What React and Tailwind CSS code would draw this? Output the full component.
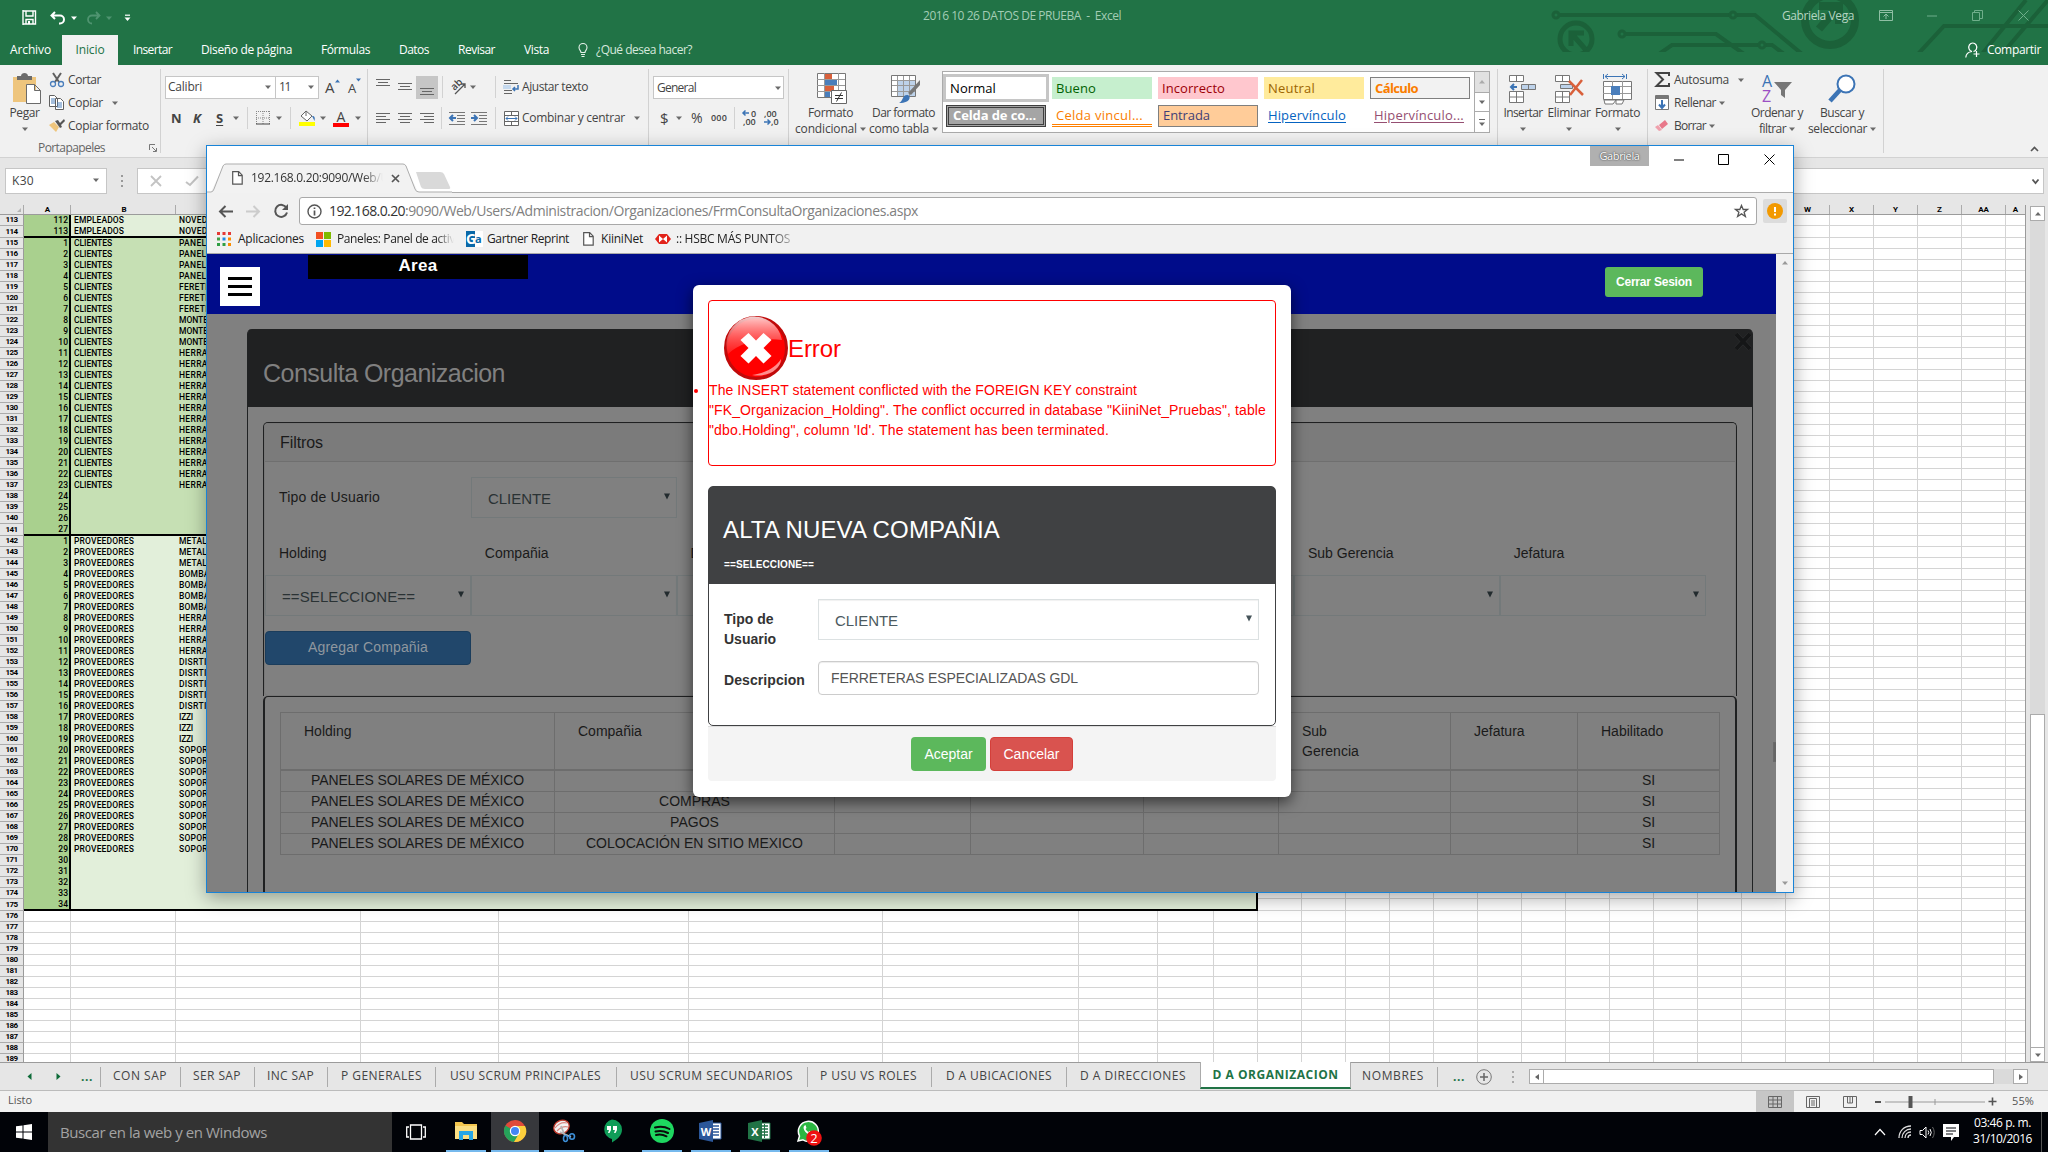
import React, { useLayoutEffect, useRef, useState } from "react";

const UI = "font-['Open_Sans','Noto_Sans',sans-serif]";

/* Text that is tracked so that it fills exactly w pixels. */
function Fit({ w, className = "", children }) {
  const ref = useRef(null);
  const [ls, setLs] = useState(null);
  useLayoutEffect(() => {
    const n = ref.current.textContent.length;
    setLs((w - ref.current.getBoundingClientRect().width) / n);
  }, [w]);
  return (
    <span
      ref={ref}
      className={"inline-block shrink-0 whitespace-pre " + className}
      style={ls === null ? undefined : { letterSpacing: ls + "px" }}
    >
      {children}
    </span>
  );
}

function Ic({ w, h, className = "", children }) {
  return (
    <svg width={w} height={h} viewBox={`0 0 ${w} ${h}`} fill="none" className={"block shrink-0 overflow-visible " + className}>
      {children}
    </svg>
  );
}

const Tri = ({ className = "", c = "#6a6a6a" }) => (
  <Ic w={6} h={4} className={className}>
    <path d="M0 0.5h6L3 4z" fill={c} />
  </Ic>
);

const Sep = ({ className = "" }) => <div className={"w-px shrink-0 bg-[#d2d2d2] " + className} />;

/* ---------- Excel title bar ---------- */
function Circuit() {
  return (
    <div className="absolute left-[1540px] top-0 h-[52px] w-[508px] overflow-hidden">
      <Ic w={508} h={52}>
        <g stroke="#1b6139" strokeWidth="4">
          <circle cx="16" cy="15" r="3" strokeWidth="3" />
          <path d="M19 15H190M197 15H215L262 54" />
          <circle cx="193" cy="15" r="3" strokeWidth="3" />
          <circle cx="82" cy="34" r="3" strokeWidth="3" />
          <path d="M85 34H176L204 54M119 54L132 45H219M226 45H232L244 54" />
          <circle cx="222" cy="45" r="3" strokeWidth="3" />
          <circle cx="36" cy="39" r="16" strokeWidth="5" />
          <path d="M31 46V33H44M32 34L46 50" strokeWidth="5" />
          <circle cx="290" cy="20" r="25" strokeWidth="8" />
          <path d="M279 6H299V24M298 7L279 29" strokeWidth="8" />
          <path d="M378 54L404 26H508M442 54L486 0M462 54L508 0" />
        </g>
      </Ic>
    </div>
  );
}

function TitleBar() {
  return (
    <div className="relative h-[65px] overflow-hidden bg-[#217346] text-white">
      <Circuit />
      <div className="relative flex h-[35px] items-center text-[12px] leading-4">
        <Ic w={15} h={15} className="ml-[22px]">
          <path d="M1 1h12.500v13H1M1 0v15M4 14v-4.500h7V14M4 1.500v4.500h7v-4.500" stroke="#fff" strokeWidth="1.400" />
          <path d="M6 11h2v3H6z" fill="#fff" />
        </Ic>
        <Ic w={16} h={14} className="ml-[13px]">
          <path d="M5 1L1.5 4.5L5 8M2 4.5H10a4 4 0 0 1 0 8H9" stroke="#fff" strokeWidth="2" />
        </Ic>
        <Tri className="ml-[5px]" c="#fff" />
        <Ic w={16} h={14} className="ml-[9px]">
          <path d="M10 1L13.5 4.5L10 8M13 4.5H6a4 4 0 0 0 0 8" stroke="#4f9470" strokeWidth="1.8" />
        </Ic>
        <Tri className="ml-[4px]" c="#4f9470" />
        <Ic w={7} h={8} className="ml-[12px]">
          <path d="M1 1.200h5" stroke="#fff" strokeWidth="1.200" />
          <path d="M0.500 3.500h6L3.500 7z" fill="#fff" />
        </Ic>
        <div className="ml-[792px] flex text-[#a3cdb5] pb-[3px]">
          <Fit w={198}>2016 10 26 DATOS DE PRUEBA  -  Excel</Fit>
        </div>
        <div className="ml-[661px] flex pb-[3px] text-[#b5d5c2]">
          <Fit w={72}>Gabriela Vega</Fit>
        </div>
        <Ic w={14} h={11} className="-mt-[4px] ml-[25px]">
          <path d="M0.500 0.500h13v10H0.500zM0.500 2.500h13M7 9V4M4.500 6.500L7 4l2.500 2.500" stroke="#8fbfa4" />
        </Ic>
        <Ic w={10} h={2} className="-mt-[4px] ml-[34px]"><path d="M0 1h10" stroke="#6fae8b" /></Ic>
        <Ic w={11} h={11} className="-mt-[4px] ml-[35px]"><path d="M0.500 2.500h7v8h-7zM2.500 2V0.500h8v8H8" stroke="#6fae8b" /></Ic>
        <Ic w={11} h={11} className="-mt-[4px] ml-[35px]"><path d="M0.500 0.500l10 10M10.500 0.500l-10 10" stroke="#6fae8b" /></Ic>
      </div>
      <div className="relative flex h-[30px] items-center text-[12px] leading-4">
        <Fit w={41} className="ml-[10px]">Archivo</Fit>
        <div className="ml-[11px] flex h-[30px] w-[56px] items-center justify-center bg-[#f1f1f1] text-[#217346]"><Fit w={29}>Inicio</Fit></div>
        <Fit w={39} className="ml-[15px]">Insertar</Fit>
        <Fit w={91} className="ml-[29px]">Diseño de página</Fit>
        <Fit w={49} className="ml-[29px]">Fórmulas</Fit>
        <Fit w={30} className="ml-[29px]">Datos</Fit>
        <Fit w={37} className="ml-[29px]">Revisar</Fit>
        <Fit w={25} className="ml-[29px]">Vista</Fit>
        <Ic w={10} h={14} className="ml-[29px]">
          <path d="M3 9.500C3 7.500 1 7 1 4.500a4 4 0 0 1 8 0C9 7 7 7.500 7 9.500zM3 11.500h4M3.500 13.500h3" stroke="#e6f1ea" strokeWidth="1.1" />
        </Ic>
        <Fit w={96} className="ml-[8px] text-[#d6e8dd]">¿Qué desea hacer?</Fit>
        <Ic w={15} h={16} className="ml-[1273px]">
          <path d="M7 9.500a4 4.300 0 1 1 1.500 0M7 9.500C3 10 1 12 0.800 15.500M11.500 9v6M8.500 12h6" stroke="#fff" strokeWidth="1.200" />
        </Ic>
        <Fit w={54} className="ml-[7px]">Compartir</Fit>
      </div>
    </div>
  );
}

/* ---------- Ribbon ---------- */
const Lines = ({ rows, h = 14, className = "" }) => (
  <Ic w={15} h={h} className={className}>
    {rows.map(([x, y, l], i) => <path key={i} d={`M${x} ${y}.5h${l}`} stroke="#666" />)}
  </Ic>
);

function Stack({ className, icon, lines, arrowBelow }) {
  return (
    <div className={"flex flex-col items-center " + className}>
      <div className="mt-[7px] flex h-[33px] items-center">{icon}</div>
      <div className="flex h-4 items-center">{lines[0]}</div>
      <div className="flex h-4 items-center gap-[3px]">{arrowBelow ? <Tri /> : <>{lines[1]}<Tri /></>}</div>
    </div>
  );
}

function Clipboard() {
  return (
    <div className="flex w-[160px] flex-col">
      <div className="flex h-[73px]">
        <div className="w-[48px]">
          <Stack
            className="w-[49px]"
            arrowBelow
            icon={
              <Ic w={30} h={31} className="ml-[5px]">
                <path d="M1 4h23v25H1z" fill="#eec57d" />
                <path d="M5 7V3h4c0-4 7-4 7 0h4v4z" fill="#6b6b6b" />
                <path d="M14.500 11.500h8l6 6v13h-14zM22.500 11.500v6h6" fill="#fff" stroke="#6b6b6b" />
              </Ic>
            }
            lines={[<Fit key="a" w={30}>Pegar</Fit>]}
          />
        </div>
        <div className="flex flex-col pt-[3px]">
          <div className="flex h-[23px] items-center">
            <Ic w={16} h={16} className="ml-[1px]">
              <path d="M4 1l6 9M12 1L6 10" stroke="#606060" strokeWidth="2" />
              <circle cx="4" cy="12" r="2.500" stroke="#4a7ebb" strokeWidth="1.300" />
              <circle cx="12" cy="12" r="2.500" stroke="#4a7ebb" strokeWidth="1.300" />
            </Ic>
            <Fit w={33} className="ml-[3px]">Cortar</Fit>
          </div>
          <div className="flex h-[23px] items-center">
            <Ic w={16} h={15} className="ml-[1px]">
              <path d="M0.500 0.500h5l3 3v8h-8zM6.500 3.500h5l3 3v8h-8z" fill="#fff" stroke="#606060" />
              <path d="M2 4h4M2 6h4M2 8h4M8 8h5M8 10h5M8 12h5" stroke="#4a7ebb" />
            </Ic>
            <Fit w={35} className="ml-[3px]">Copiar</Fit>
            <Tri className="ml-[9px]" />
          </div>
          <div className="flex h-[23px] items-center">
            <Ic w={16} h={15} className="ml-[1px]">
              <path d="M0 7l5-3 5 5-3 5z" fill="#eec57d" />
              <path d="M6 3l3-1 2 3 4-4 1 2-4 4 1 2-2 1z" fill="#555" />
            </Ic>
            <Fit w={81} className="ml-[3px]">Copiar formato</Fit>
          </div>
        </div>
      </div>
      <div className="flex h-[19px] items-center text-[#666]">
        <Fit w={67} className="ml-[38px]">Portapapeles</Fit>
        <Ic w={8} h={8} className="ml-[44px]"><path d="M0.500 6V0.500H6M3 3l4 4M7.500 4v3.500H4" stroke="#777" /></Ic>
      </div>
    </div>
  );
}

function FontGroup() {
  return (
    <div className="flex w-[206px] flex-col pt-[11px]">
      <div className="flex h-[22px] items-center">
        <div className="ml-[4px] flex h-[23px] w-[111px] items-center border border-[#c6c6c6] bg-white pl-[2px]"><Fit w={34}>Calibri</Fit><Tri className="ml-[63px]" /></div>
        <div className="-ml-px flex h-[23px] w-[44px] items-center border border-[#c6c6c6] bg-white pl-[3px]"><Fit w={11}>11</Fit><Tri className="ml-[18px]" /></div>
        <div className="ml-[6px] flex w-[23px] items-start"><span className="text-[15px] leading-5">A</span><Ic w={5} h={4} className="mt-[2px]"><path d="M0 3.500L2.500 0.500L5 3.500z" fill="#3c74b5" /></Ic></div>
        <div className="flex items-start"><span className="pt-[2px] text-[13px] leading-5">A</span><Ic w={5} h={4} className="mt-[2px]"><path d="M0 0.500h5L2.500 3.500z" fill="#3c74b5" /></Ic></div>
      </div>
      <div className="mt-[9px] flex h-[22px] items-center">
        <span className="ml-[10px] w-[22px] text-[13px] font-bold">N</span>
        <span className="w-[23px] text-[13px] font-bold italic">K</span>
        <span className="w-[17px] text-[13px] font-bold underline underline-offset-2">S</span>
        <Tri />
        <Sep className="ml-[8px] h-[22px]" />
        <Ic w={14} h={14} className="ml-[8px]">
          <path d="M0.500 0v13M13.500 0v13M7 0v13M0 0.500h14M0 7h14" stroke="#888" strokeDasharray="1 1" />
          <path d="M0 13h14" stroke="#444" />
        </Ic>
        <Tri className="ml-[6px]" />
        <Sep className="ml-[8px] h-[22px]" />
        <Ic w={17} h={16} className="ml-[8px]">
          <path d="M2 6l5-5 6 5-5 5zM7 1v5" fill="#fff" stroke="#666" />
          <path d="M13 6c3 0 3 2 2.500 5z" fill="#3c74b5" />
          <path d="M0 12h16v4H0z" fill="#ff0" />
        </Ic>
        <Tri className="ml-[4px]" />
        <div className="ml-[7px] flex h-[17px] w-[16px] items-start justify-center border-b-4 border-[#f00]"><span className="text-[14px] leading-[14px]">A</span></div>
        <Tri className="ml-[6px]" />
      </div>
    </div>
  );
}

function AlignGroup() {
  return (
    <div className="flex w-[280px] flex-col pt-[11px]">
      <div className="flex h-[22px] items-center">
        <Lines className="ml-[8px] -mt-[9px]" h={8} rows={[[0, 0, 14], [2, 3, 10], [0, 6, 14]]} />
        <Lines className="ml-[7px]" h={8} rows={[[0, 0, 14], [2, 3, 10], [0, 6, 14]]} />
        <div className="ml-[3px] flex h-[23px] w-[22px] items-end justify-center bg-[#c6c6c6] pb-[3px]"><Lines className="" h={8} rows={[[0, 0, 14], [2, 3, 10], [0, 6, 14]]} /></div>
        <Sep className="ml-[4px] h-[22px]" />
        <div className="relative ml-[7px] flex h-[16px] w-[16px] items-center">
          <span className="-mt-[6px] -rotate-45 text-[10px] font-semibold leading-3">ab</span>
          <Ic w={16} h={16} className="absolute left-0 top-0"><path d="M5 15L15 5M15 9V5h-4" stroke="#555" strokeWidth="1.300" /></Ic>
        </div>
        <Tri className="ml-[4px]" />
        <Sep className="ml-[19px] h-[22px]" />
        <Ic w={16} h={15} className="ml-[7px]">
          <path d="M1 0.500h7M1 3.500h14M1 6.500h7M1 10.500h8M1 13.500h8" stroke="#666" />
          <path d="M0 5h8v4H0z" fill="#c5d9ee" />
          <path d="M15 5v4h-5M12 7l-2 2 2 2" stroke="#3c74b5" strokeWidth="1.500" />
        </Ic>
        <Fit w={66} className="ml-[3px]">Ajustar texto</Fit>
      </div>
      <div className="mt-[9px] flex h-[22px] items-center">
        <Lines className="ml-[8px]" h={11} rows={[[0, 0, 14], [0, 3, 10], [0, 6, 14], [0, 9, 10]]} />
        <Lines className="ml-[7px]" h={11} rows={[[0, 0, 14], [2, 3, 10], [0, 6, 14], [2, 9, 10]]} />
        <Lines className="ml-[7px]" h={11} rows={[[0, 0, 14], [4, 3, 10], [0, 6, 14], [4, 9, 10]]} />
        <Sep className="ml-[6px] h-[22px]" />
        <Ic w={16} h={13} className="ml-[7px]">
          <path d="M0 0.500h16M8 3.500h8M8 6.500h8M8 9.500h8M0 12.500h16" stroke="#777" />
          <path d="M7 6H1M4 3L1 6l3 3" stroke="#3c74b5" strokeWidth="2" />
        </Ic>
        <Ic w={16} h={13} className="ml-[6px]">
          <path d="M0 0.500h16M8 3.500h8M8 6.500h8M8 9.500h8M0 12.500h16" stroke="#777" />
          <path d="M0 6h6M3 3l3 3-3 3" stroke="#3c74b5" strokeWidth="2" />
        </Ic>
        <Sep className="ml-[8px] h-[22px]" />
        <Ic w={15} h={15} className="ml-[8px]">
          <path d="M0.500 0.500h14v14H0.500zM0.500 4.500h14M0.500 10.500h14M7.500 0.500v4M7.500 10.500v4" fill="#fff" stroke="#666" />
          <path d="M2 7.500h11M4 5.500l-2 2 2 2M11 5.500l2 2-2 2" stroke="#3c74b5" />
        </Ic>
        <Fit w={103} className="ml-[3px]">Combinar y centrar</Fit>
        <Tri className="ml-[9px]" />
      </div>
    </div>
  );
}

function NumberGroup() {
  const digits = "absolute text-[9px] font-semibold leading-[8px]";
  return (
    <div className="flex w-[139px] flex-col pt-[11px]">
      <div className="ml-[4px] flex h-[23px] w-[131px] items-center border border-[#c6c6c6] bg-white pl-[3px]"><Fit w={39}>General</Fit><Tri className="ml-[79px]" /></div>
      <div className="mt-[8px] flex h-[22px] items-center">
        <span className="ml-[11px] w-[16px] text-[15px]">$</span>
        <Tri />
        <Fit w={13} className="ml-[9px] text-[14px]">%</Fit>
        <Fit w={16} className="ml-[7px] text-[9px] font-semibold">000</Fit>
        <Sep className="ml-[7px] h-[22px]" />
        <div className="relative ml-[7px] h-[16px] w-[16px]">
          <span className={digits + " left-[9px] top-0"}>0</span>
          <span className={digits + " left-[1px] top-[8px]"}>,00</span>
          <Ic w={16} h={15}><path d="M7 3H1M3.500 0.500L1 3l2.500 2.500" stroke="#3c74b5" strokeWidth="1.500" /></Ic>
        </div>
        <div className="relative ml-[6px] h-[16px] w-[16px]">
          <span className={digits + " left-0 top-0"}>,00</span>
          <span className={digits + " left-[7px] top-[8px]"}>,0</span>
          <Ic w={16} h={15}><path d="M0 12h6M3.500 9.500L6 12l-2.500 2.500" stroke="#3c74b5" strokeWidth="1.500" /></Ic>
        </div>
      </div>
    </div>
  );
}

function Styles() {
  const cell = "flex h-[22px] w-[100px] items-center pl-[4px] text-[13px] leading-4";
  return (
    <div className="mt-[6px] flex h-[62px] w-[548px] border border-[#ababab] bg-white">
      <div className="grid grow grid-cols-[100px_100px_100px_100px_100px] content-start gap-x-[6px] gap-y-[6px] pl-[3px] pt-[5px]">
        <div className={cell + " text-black outline-[3px] outline-[#c6c6c6] outline"}><Fit w={46}>Normal</Fit></div>
        <div className={cell + " bg-[#c6efce] text-[#006100]"}><Fit w={40}>Bueno</Fit></div>
        <div className={cell + " bg-[#ffc7ce] text-[#9c0006]"}><Fit w={63}>Incorrecto</Fit></div>
        <div className={cell + " bg-[#ffeb9c] text-[#9c6500]"}><Fit w={47}>Neutral</Fit></div>
        <div className={cell + " border border-[#7f7f7f] bg-[#f2f2f2] pl-[3px] font-bold text-[#fa7d00]"}><Fit w={43}>Cálculo</Fit></div>
        <div className={cell + " border-[3px] border-double border-[#3f3f3f] bg-[#a5a5a5] pl-[1px] pb-[2px] font-bold text-white"}><Fit w={83}>Celda de co...</Fit></div>
        <div className={cell + " border-b-[3px] border-double border-[#ff8001] text-[#fa7d00]"}><Fit w={87}>Celda vincul...</Fit></div>
        <div className={cell + " border border-[#7f7f7f] bg-[#ffcc99] pl-[3px] pb-[2px] text-[#3f3f76]"}><Fit w={47}>Entrada</Fit></div>
        <div className={cell + " pb-[2px] text-[#0563c1] underline underline-offset-2"}><Fit w={78}>Hipervínculo</Fit></div>
        <div className={cell + " pb-[2px] text-[#954f72] underline underline-offset-2"}><Fit w={90}>Hipervínculo...</Fit></div>
      </div>
      <div className="flex w-[15px] flex-col border-l border-[#ababab]">
        <div className="flex h-[20px] items-center justify-center bg-[#e1e1e1]"><Tri className="rotate-180" c="#ababab" /></div>
        <div className="flex h-[20px] items-center justify-center border-y border-[#ababab]"><Tri /></div>
        <div className="flex h-[20px] flex-col items-center justify-center gap-[2px]"><div className="h-px w-[6px] bg-[#6a6a6a]" /><Tri /></div>
      </div>
    </div>
  );
}

function StylesGroup() {
  return (
    <div className="flex w-[708px]">
      <Stack className="ml-[3px] w-[77px]" icon={
        <Ic w={31} h={31} className="ml-[3px]">
          <path d="M0.500 0.500h28v24h-28z" fill="#fff" stroke="#777" />
          <path d="M8 1h7v5H8zM8 12h9v6H8z" fill="#d9603b" /><path d="M8 6h12v6H8zM8 18h5v6H8z" fill="#4a7ebb" />
          <path d="M7.500 0v24M21.500 0v24M0 6.500h28M0 12.500h28M0 18.500h28" stroke="#999" />
          <path d="M14.500 17.500h15v13h-15z" fill="#fff" stroke="#666" />
          <path d="M18 22.500h8M18 25.500h8M24.500 19.500l-5 9" stroke="#333" />
        </Ic>} lines={[<Fit key="a" w={45}>Formato</Fit>, <Fit key="b" w={62}>condicional</Fit>]} />
      <Stack className="w-[69px]" icon={
        <Ic w={30} h={30} className="ml-[5px]">
          <path d="M0.500 1.500h24v21H0.500z" fill="#fff" stroke="#777" />
          <path d="M7 7h17v15H7z" fill="#bdd2ea" />
          <path d="M6.500 2v20M12.500 2v20M18.500 2v20M1 6.500h23M1 11.500h23M1 17.500h23" stroke="#999" />
          <path d="M29 6v5L20 21l-3-2z" fill="#777" /><path d="M8 29c4-1 3-8 8-8 4 0 5 8-8 8z" fill="#3c74b5" />
        </Ic>} lines={[<Fit key="a" w={63}>Dar formato</Fit>, <Fit key="b" w={60}>como tabla</Fit>]} />
      <div className="ml-[4px]"><Styles /></div>
    </div>
  );
}

const CellStack = ({ del }) => (
  <Ic w={30} h={30}>
    <path d="M1.500 1.500h14v6h-14zM8.500 1.500v6M1.500 17.500h14v11h-14zM8.500 17.500v11M1.500 23h14" fill="#fff" stroke="#777" />
    <path d={del ? "M6.500 10.500h12v4h-12z" : "M13.500 10.500h14v5h-14zM20.500 10.500v5"} fill="#bdd2ea" stroke="#777" />
    {del
      ? <path d="M15 7l14 14M28 6L16 21" stroke="#d9603b" strokeWidth="2.500" />
      : <path d="M9 13H3M6 10l-3 3 3 3" stroke="#3c74b5" strokeWidth="2" />}
  </Ic>
);

function Ribbon() {
  return (
    <div className="flex h-[93px] border-b border-[#d2d2d2] bg-[#f1f1f1] text-[12px] leading-4 text-[#444]">
      <Clipboard />
      <Sep className="mt-1 h-[84px]" />
      <FontGroup />
      <Sep className="mt-1 h-[84px]" />
      <AlignGroup />
      <Sep className="mt-1 h-[84px]" />
      <NumberGroup />
      <Sep className="mt-1 h-[84px]" />
      <StylesGroup />
      <Sep className="mt-1 h-[84px]" />
      <div className="flex w-[149px] pl-[3px]">
        <Stack arrowBelow className="w-[44px]" icon={<CellStack />} lines={[<Fit key="a" w={39}>Insertar</Fit>]} />
        <Stack arrowBelow className="w-[48px]" icon={<CellStack del />} lines={[<Fit key="a" w={43}>Eliminar</Fit>]} />
        <Stack arrowBelow className="w-[49px]" icon={
          <Ic w={29} h={32}>
            <path d="M0.500 1v5M23.500 1v5M2 3.500h20M5 1L2 3.500 5 6M19 1l3 2.500L19 6" stroke="#3c74b5" />
            <path d="M0.500 8.500h28v18h-28z" fill="#fff" stroke="#777" />
            <path d="M9.500 8v18M19.500 8v18M0 13.500h28M0 20.500h28" stroke="#999" /><path d="M8 13h9v9H8z" fill="#4a7ebb" />
            <path d="M1 27h12l-3 4H2zM13 27h8l-2 4h-6z" fill="#fff" stroke="#777" />
          </Ic>} lines={[<Fit key="a" w={45}>Formato</Fit>]} />
      </div>
      <Sep className="mt-1 h-[84px]" />
      <div className="flex w-[235px]">
        <div className="flex w-[97px] flex-col pl-[7px] pt-[3px]">
          <div className="flex h-[23px] items-center">
            <Ic w={15} h={15}><path d="M14 4V1H1.500L8 7.500 1.500 14H14v-3" stroke="#444" strokeWidth="2" /></Ic>
            <Fit w={55} className="ml-[4px]">Autosuma</Fit><Tri className="ml-[9px]" />
          </div>
          <div className="flex h-[23px] items-center">
            <Ic w={15} h={15}><path d="M0.500 0.500h13v14h-13z" fill="#fff" stroke="#777" /><path d="M1 1h12v3H1z" fill="#777" /><path d="M7 5v8M4 9.500L7 13l3-3.500" stroke="#3c74b5" strokeWidth="2" /></Ic>
            <Fit w={42} className="ml-[4px]">Rellenar</Fit><Tri className="ml-[3px]" />
          </div>
          <div className="flex h-[23px] items-center">
            <Ic w={15} h={15}><path d="M4 7l6-5 3 4-6 5z" fill="#e8788a" /><path d="M0 9l3-2 4 5-3 1z" fill="#f0a0ac" /></Ic>
            <Fit w={32} className="ml-[4px]">Borrar</Fit><Tri className="ml-[3px]" />
          </div>
        </div>
        <Stack className="w-[64px]" icon={
          <div className="flex h-[30px] w-[30px]">
            <div className="flex w-[11px] flex-col text-[16px]"><span className="h-[15px] leading-[15px] text-[#3c74b5]">A</span><span className="h-[15px] leading-[15px] text-[#9b4fc4]">Z</span></div>
            <Ic w={19} h={30}><path d="M1 8h18l-7 8v8l-4-3v-5z" fill="#777" /></Ic>
          </div>} lines={[<Fit key="a" w={52}>Ordenar y</Fit>, <Fit key="b" w={27}>filtrar</Fit>]} />
        <Stack className="w-[66px]" icon={
          <Ic w={28} h={29}>
            <circle cx="18" cy="10" r="8.500" stroke="#3c74b5" strokeWidth="2" fill="#fff" /><path d="M12 16L2 27" stroke="#3c74b5" strokeWidth="4.500" />
          </Ic>} lines={[<Fit key="a" w={44}>Buscar y</Fit>, <Fit key="b" w={59}>seleccionar</Fit>]} />
      </div>
      <Sep className="mt-1 h-[84px]" />
      <Ic w={9} h={6} className="ml-[146px] mt-[81px]"><path d="M1 5l3.500-3.500L8 5" stroke="#555" strokeWidth="1.600" /></Ic>
    </div>
  );
}

/* ---------- Sheet ---------- */
const COLS = [
  "w-[47px]", "w-[105px]", "w-[185px]", "w-[138px]", "w-[190px]", "w-[194px]", "w-[196px]", "w-[79px]", "w-[56px]", "w-[44px]",
  ...Array(17).fill("w-[44px]"), "w-[20px]",
];
const HEADS = { 0: "A", 1: "B", 22: "W", 23: "X", 24: "Y", 25: "Z", 26: "AA", 27: "A" };

const third = (r) =>
  r <= 114 ? ["NOVEDADES", 50] : r <= 118 ? ["PANELES", 38] : r <= 121 ? ["FERETERO", 43] : r <= 124 ? ["MONTERO", 40] : r <= 137 ? ["HERRAJE", 39]
    : r <= 144 ? ["METALES", 38] : r <= 148 ? ["BOMBAS", 36] : r <= 152 ? ["HERRAJE", 39] : r <= 157 ? ["DISRTIN", 34] : r <= 160 ? ["IZZI", 14] : ["SOPORTE", 39];

function Row({ r }) {
  const green = r <= 175;
  const last = r === 114 || r === 141 || r === 175;
  const [name, nameW] = r <= 114 ? ["EMPLEADOS", 50] : r <= 137 ? ["CLIENTES", 38] : r >= 142 && r <= 170 ? ["PROVEEDORES", 60] : ["", 0];
  const num = r <= 114 ? r - 1 : r <= 141 ? r - 114 : r - 141;
  const tone = r >= 115 && r <= 141 ? " bg-[#c6e0b4]" : " bg-[#e2efda]";
  const [t, tw] = third(r);
  return (
    <div className={"flex shrink-0 text-[8.5px] font-medium leading-[11px] text-black " + (last ? "h-[12px]" : "h-[11px]")}>
      <div className="flex w-[24px] shrink-0 items-end justify-center border-b border-r border-b-[#ababab] border-r-[#9b9b9b] bg-[#e6e6e6] text-[8px] font-bold leading-[10px]"><Fit w={12}>{r}</Fit></div>
      {COLS.map((w, i) => {
        if (green && i < 10) {
          const edge = last ? " border-b-[2px] border-b-black" : "";
          if (i === 0) return <div key={i} className={w + " flex shrink-0 justify-end border-r-[2px] border-r-black bg-[#a9d08e] pr-px" + edge}><span>{num}</span></div>;
          if (i === 1) return <div key={i} className={w + " flex shrink-0 pl-[3px]" + tone + edge}>{name && <Fit w={nameW}>{name}</Fit>}</div>;
          if (i === 2) return <div key={i} className={w + " flex shrink-0 pl-[3px]" + tone + edge}>{name && <Fit w={tw}>{t}</Fit>}</div>;
          return <div key={i} className={w + " shrink-0" + tone + edge + (i === 9 ? " border-r-[2px] border-r-black" : "")} />;
        }
        return <div key={i} className={w + " shrink-0 border-b border-r border-[#d4d4d4] bg-white"} />;
      })}
    </div>
  );
}

function Sheet() {
  const rows = [];
  for (let r = 113; r <= 189; r++) rows.push(r);
  return (
    <div className="flex h-[857px] bg-[#e6e6e6]">
      <div className="flex w-[2026px] shrink-0 flex-col overflow-hidden border-r border-[#9b9b9b] font-['Roboto','Liberation_Sans',sans-serif]">
        <div className="flex h-[10px] shrink-0 border-b border-[#9b9b9b] text-[8px] font-bold leading-[9px] text-black">
          <div className="flex w-[24px] shrink-0 items-end justify-end border-r border-[#ababab] p-[2px]"><Ic w={4} h={4}><path d="M4 0v4H0z" fill="#b5b5b5" /></Ic></div>
          {COLS.map((w, i) => <div key={i} className={w + " shrink-0 overflow-hidden border-r border-[#ababab] text-center " + (i === 1 ? "pl-[2px]" : i === 0 ? "pl-[1px]" : "")}>{HEADS[i] || ""}</div>)}
        </div>
        {rows.map((r) => <Row key={r} r={r} />)}
      </div>
      <div className="ml-[4px] flex w-[15px] flex-col">
        <div className="mt-[1px] flex h-[15px] items-center justify-center border border-[#ababab] bg-white"><Tri className="rotate-180" /></div>
        <div className="h-[493px] bg-[#dadada]" />
        <div className="h-[334px] border border-[#ababab] bg-white" />
        <div className="-mt-px flex h-[15px] items-center justify-center border border-[#ababab] bg-white"><Tri /></div>
      </div>
    </div>
  );
}

function FormulaBar() {
  return (
    <div className="flex h-[47px] bg-[#e6e6e6] pt-[10px] text-[12px] leading-4 text-[#444]">
      <div className="ml-[5px] flex h-[26px] w-[102px] items-center border border-[#c6c6c6] bg-white"><Fit w={22} className="ml-[6px]">K30</Fit><Tri className="-mt-[2px] ml-[59px]" /></div>
      <Ic w={2} h={12} className="ml-[14px] mt-[7px]"><path d="M1 0v2M1 5v2M1 10v2" stroke="#999" strokeWidth="2" /></Ic>
      <div className="ml-[14px] flex h-[26px] w-[1907px] items-center border border-[#c6c6c6] bg-white">
        <Ic w={12} h={10} className="ml-[12px]"><path d="M1 0l10 10M11 0L1 10" stroke="#c3c3c3" strokeWidth="1.800" /></Ic>
        <Ic w={14} h={10} className="ml-[23px]"><path d="M1 6l4 3L13 0.500" stroke="#c3c3c3" strokeWidth="2" /></Ic>
        <Ic w={7} h={5} className="ml-auto mr-[4px]"><path d="M0.500 0.500L3.500 4l3-3.500" stroke="#555" strokeWidth="1.800" /></Ic>
      </div>
    </div>
  );
}

const T = ({ w, ml, children }) => <Fit w={w} className={ml + " pb-[2px]"}>{children}</Fit>;
const TSep = ({ ml = "ml-[13px]" }) => <div className={"h-[20px] w-px shrink-0 bg-[#ababab] " + ml} />;

function SheetTabs() {
  return (
    <div className="flex h-[29px] items-center border-b border-t border-b-[#bcbcbc] border-t-[#9b9b9b] bg-[#e6e6e6] text-[12px] leading-4 text-[#444]">
      <Ic w={5} h={7} className="ml-[27px]"><path d="M4.500 0v7L0.500 3.500z" fill="#0d6b38" /></Ic>
      <Ic w={5} h={7} className="ml-[24px]"><path d="M0.500 0v7L4.500 3.500z" fill="#0d6b38" /></Ic>
      <Fit w={12} className="ml-[20px] font-bold text-[#217346]">...</Fit>
      <TSep ml="ml-[7px]" />
      <T w={54} ml="ml-[12px]">CON SAP</T><TSep />
      <T w={48} ml="ml-[12px]">SER SAP</T><TSep />
      <T w={47} ml="ml-[12px]">INC SAP</T><TSep />
      <T w={81} ml="ml-[13px]">P GENERALES</T><TSep />
      <T w={151} ml="ml-[14px]">USU SCRUM PRINCIPALES</T><TSep ml="ml-[15px]" />
      <T w={163} ml="ml-[13px]">USU SCRUM SECUNDARIOS</T><TSep ml="ml-[14px]" />
      <T w={97} ml="ml-[12px]">P USU VS ROLES</T><TSep ml="ml-[14px]" />
      <T w={106} ml="ml-[14px]">D A UBICACIONES</T><TSep ml="ml-[14px]" />
      <T w={106} ml="ml-[13px]">D A DIRECCIONES</T>
      <div className="-mt-[2px] ml-[14px] flex h-[27px] w-[151px] shrink-0 items-center justify-center border-x border-b-2 border-x-[#ababab] border-b-[#217346] bg-white font-bold text-[#217346]"><Fit w={126}>D A ORGANIZACION</Fit></div>
      <T w={62} ml="ml-[11px]">NOMBRES</T><TSep />
      <Fit w={12} className="ml-[15px] font-bold text-[#217346]">...</Fit>
      <Ic w={16} h={16} className="ml-[11px]"><circle cx="8" cy="8" r="7.300" stroke="#777" /><path d="M8 4v8M4 8h8" stroke="#666" strokeWidth="1.500" /></Ic>
      <Ic w={2} h={12} className="ml-[20px]"><path d="M1 0v2M1 5v2M1 10v2" stroke="#aaa" strokeWidth="2" /></Ic>
      <div className="ml-auto mr-[20px] flex h-[15px] w-[499px] shrink-0 bg-[#dadada]">
        <div className="flex w-[15px] items-center justify-center border border-[#ababab] bg-white"><Ic w={4} h={6}><path d="M4 0v6L0 3z" fill="#666" /></Ic></div>
        <div className="-ml-px w-[451px] border border-[#ababab] bg-white" />
        <div className="ml-auto flex w-[15px] items-center justify-center border border-[#ababab] bg-white"><Ic w={4} h={6}><path d="M0 0v6L4 3z" fill="#666" /></Ic></div>
      </div>
    </div>
  );
}

function StatusBar() {
  return (
    <div className="flex h-[21px] items-center bg-[#f1f1f1] text-[11px] leading-4 text-[#555]">
      <Fit w={24} className="ml-[8px] pb-[3px]">Listo</Fit>
      <div className="ml-[1724px] flex h-full w-[38px] items-center justify-center bg-[#c6c6c6]"><Ic w={14} h={12}><path d="M0.500 0.500h13v11H0.500zM5 0.500v11M9.500 0.500v11M0 4h14M0 8h14" stroke="#666" /></Ic></div>
      <Ic w={14} h={12} className="ml-[12px]"><path d="M0.500 0.500h13v11H0.500zM3.500 2.500h7v9h-7zM5 5h4M5 7h4M5 9h4" stroke="#666" /></Ic>
      <Ic w={14} h={12} className="ml-[23px]"><path d="M0.500 0.500h13v11H0.500zM4.500 1v6h5V1M7 1v6" stroke="#666" /></Ic>
      <div className="ml-[18px] h-[2px] w-[6px] bg-[#555]" />
      <Ic w={100} h={12} className="ml-[4px]"><path d="M0 6h100" stroke="#999" /><path d="M50 3v6" stroke="#999" /><path d="M23.500 0h4v12h-4z" fill="#555" /></Ic>
      <Ic w={9} h={9} className="ml-[3px]"><path d="M4.500 0.500v8M0.500 4.500h8" stroke="#555" strokeWidth="1.600" /></Ic>
      <Fit w={22} className="ml-[15px] pb-[2px]">55%</Fit>
    </div>
  );
}

/* ---------- Taskbar ---------- */
const Task = ({ className = "", on, children }) => (
  <div className={"flex h-full shrink-0 flex-col items-center " + className}>
    <div className="flex h-[38px] items-center">{children}</div>
    {on && <div className="h-[2px] w-full bg-[#76b9ed]" />}
  </div>
);

const Office = ({ c, letter }) => (
  <Ic w={24} h={22}>
    <path d="M11 3h11v16H11z" fill="#fff" stroke={c} />
    <path d="M13 6h7M13 9h7M13 12h7M13 15h7" stroke={c} strokeWidth="1.300" />
    {letter === "X" && <path d="M16.500 4v14" stroke={c} />}
    <path d="M0 3l14-3v22L0 19z" fill={c} />
    <text x="7" y="15.500" fontSize="11" fontWeight="bold" textAnchor="middle" fill="#fff">{letter}</text>
  </Ic>
);

function Taskbar() {
  return (
    <div className="flex h-[40px] items-center bg-[#010308] text-white">
      <Ic w={16} h={16} className="ml-[16px]"><path d="M0 2.300L6.500 1.400v6.100H0zM7.500 1.200L16 0v7.500H7.500zM0 8.500h6.500v6.100L0 13.700zM7.500 8.500H16V16l-8.500-1.200z" fill="#fff" /></Ic>
      <div className="ml-[16px] flex h-full w-[344px] items-center bg-[#333] text-[15px] text-[#a3a3a3]"><Fit w={207} className="ml-[12px]">Buscar en la web y en Windows</Fit></div>
      <Ic w={20} h={16} className="ml-[14px]"><path d="M4.500 1h11v14h-11zM3 3H0.700v10H3M17 3h2.300v10H17" stroke="#fff" strokeWidth="1.300" /></Ic>
      <Task on className="ml-[20px] w-[40px]">
        <Ic w={22} h={20}><path d="M0 1h7l2 2h13v15H0z" fill="#f3c64f" /><path d="M0 5h22v13H0z" fill="#fbdf83" /><path d="M4 10h14v9h-4v-5H8v5H4z" fill="#26a6e6" /></Ic>
      </Task>
      <Task on className="ml-[5px] w-[48px] bg-[#37383c]">
        <Ic w={24} h={24}>
          <circle cx="12" cy="12" r="11" fill="#e04a3a" />
          <path d="M12 12L2.400 6.500A11 11 0 0 0 11 23l5.500-8.500z" fill="#25a35a" />
          <path d="M12 12l4 2.500L11 23A11 11 0 0 0 22 7H12z" fill="#fbcf3c" />
          <circle cx="12" cy="12" r="5.200" fill="#fff" /><circle cx="12" cy="12" r="4" fill="#4285f4" />
        </Ic>
      </Task>
      <Task on className="ml-[5px] w-[40px]">
        <Ic w={24} h={24}>
          <ellipse cx="9.500" cy="8" rx="8" ry="6.500" fill="#f2f2f2" stroke="#c0392b" strokeWidth="1.300" transform="rotate(-25 9.500 8)" />
          <path d="M3 9c4-5 8-6 12-5M5 12c4-4 7-5 11-4" stroke="#d98880" strokeWidth="1.200" />
          <path d="M9 7l4 10M8 13l11 5" stroke="#b5b5b5" strokeWidth="1.800" />
          <ellipse cx="13.500" cy="19.500" rx="2" ry="3" stroke="#3c8fd8" strokeWidth="1.600" /><ellipse cx="20" cy="17.500" rx="2.500" ry="2.800" stroke="#3c8fd8" strokeWidth="1.600" />
        </Ic>
      </Task>
      <Task className="ml-[8px] w-[40px]">
        <Ic w={22} h={24}><path d="M11 0.500a10 10 0 0 1 10 10c0 6-5 10-10 13v-3.500a10 10 0 0 1 0-19.500z" fill="#0f9d58" /><path d="M6 7h4v4l-1.500 3H7l1-3H6zM12 7h4v4l-1.500 3H13l1-3h-2z" fill="#fff" /></Ic>
      </Task>
      <Task on className="ml-[10px] w-[40px]">
        <Ic w={24} h={24}><circle cx="12" cy="12" r="12" fill="#1ed760" /><path d="M5 8.500c5-1.500 10-1 14.500 1.500M5.500 12.500c4-1 8.500-.7 12.500 1.500M6 16c3.500-.8 7-.5 10.500 1.300" stroke="#0a0a0a" strokeWidth="2" strokeLinecap="round" /></Ic>
      </Task>
      <Task on className="ml-[9px] w-[40px]"><Office c="#2b579a" letter="W" /></Task>
      <Task on className="ml-[9px] w-[40px]"><Office c="#217346" letter="X" /></Task>
      <Task on className="ml-[9px] w-[40px]">
        <Ic w={28} h={26} className="ml-[2px] mt-[3px]">
          <path d="M2 21l1.500-5A10 10 0 1 1 7 19.800z" fill="#2cb742" stroke="#fff" strokeWidth="1.500" />
          <path d="M8 6c-2 3 3 9 7 9l1.500-2-3-2-1 1c-1-.5-2.500-2-3-3l1-1-1-3z" fill="#fff" />
          <circle cx="18" cy="18" r="7.800" fill="#ee1111" /><text x="18" y="22.500" fontSize="13" textAnchor="middle" fill="#fff">2</text>
        </Ic>
      </Task>
      <Ic w={12} h={8} className="ml-[1045px]"><path d="M1 7l5-5.500L11 7" stroke="#fff" strokeWidth="1.200" /></Ic>
      <Ic w={14} h={14} className="ml-[12px]"><path d="M1 13C1 6 6 1 13 1M4 13c0-5 4-9 9-9M7 13c0-3.500 2.500-6 6-6M10 13c0-2 1-3 3-3" stroke="#ddd" strokeWidth="1.300" /></Ic>
      <Ic w={17} h={13} className="ml-[7px]"><path d="M1 4.500h2.500L7 1v11L3.500 8.500H1z" stroke="#fff" /><path d="M9 4.500q1.500 2 0 4M11 3q2.500 3.500 0 7" stroke="#fff" /><path d="M13.500 1q3.500 5.500 0 11" stroke="#666" /></Ic>
      <Ic w={16} h={17} className="ml-[7px]"><path d="M0 0h16v13h-5l-3 4v-4H0z" fill="#fff" /><path d="M3 4h10M3 7h10M3 10h7" stroke="#010308" strokeWidth="1.200" /></Ic>
      <div className="-mt-[2px] ml-[14px] flex flex-col text-[12px] leading-4"><Fit w={58} className="ml-[1px]">03:46 p. m.</Fit><Fit w={59}>31/10/2016</Fit></div>
      <div className="ml-[9px] h-full w-px bg-[#555]" />
    </div>
  );
}

/* ---------- Browser window ---------- */
const PageIcon = ({ className = "" }) => (
  <Ic w={11} h={14} className={className}><path d="M0.700 0.700h6l3.500 3.500v9h-9.500zM6.500 0.700v4h4" fill="#fff" stroke="#555" strokeWidth="1.200" /></Ic>
);

function BrowserTop() {
  return (
    <div>
      <div className="flex h-[47px] bg-white text-[12px] leading-4">
        <div className="relative mt-[17px] flex h-[30px] w-[245px] items-center">
          <Ic w={245} h={30} className="absolute left-0 top-0">
            <path d="M0 29H4L16 3Q17 1 19 1H196Q198 1 199 3L211 29H245V30H0z" fill="#f2f2f2" />
            <path d="M0 29H4Q6 29 7 26L16 3Q17 1 19 1H196Q198 1 199 3L208 26Q209 29 212 29H245" stroke="#adadad" />
            <path d="M209 9H233Q236 9 237 11L243 24Q244 26 241 26H218Q215 26 214 24z" fill="#d9d9d9" />
          </Ic>
          <PageIcon className="relative ml-[25px]" />
          <div className="relative ml-[8px] w-[132px] overflow-hidden text-[#333] mask-[linear-gradient(90deg,#000_85%,transparent)]"><Fit w={138}>192.168.0.20:9090/Web/U</Fit></div>
          <Ic w={9} h={9} className="relative ml-[8px]"><path d="M1 1l7 7M8 1L1 8" stroke="#555" strokeWidth="1.700" /></Ic>
        </div>
        <div className="flex grow flex-col">
          <div className="flex h-[46px] items-start">
            <div className="ml-[1138px] flex h-[20px] w-[59px] items-center justify-center bg-[#b0b0b0] text-[11px] text-white [text-shadow:0_0_1px_#444,0_0_2px_#555]"><Fit w={40}>Gabriela</Fit></div>
            <Ic w={10} h={2} className="ml-[25px] mt-[13px]"><path d="M0 1h10" stroke="#000" /></Ic>
            <Ic w={11} h={11} className="ml-[34px] mt-[8px]"><path d="M0.500 0.500h10v10h-10z" stroke="#000" /></Ic>
            <Ic w={11} h={11} className="ml-[35px] mt-[8px]"><path d="M0.500 0.500l10 10M10.500 0.500l-10 10" stroke="#000" /></Ic>
          </div>
          <div className="h-px bg-[#adadad]" />
        </div>
      </div>
      <div className="flex h-[36px] items-center bg-[#f1f1f1] text-[14px] leading-5">
        <Ic w={15} h={13} className="ml-[11px]"><path d="M15 6.500H2M7.500 1L2 6.500 7.500 12" stroke="#555" strokeWidth="2" /></Ic>
        <Ic w={15} h={13} className="ml-[13px]"><path d="M0 6.500h13M7.500 1L13 6.500 7.500 12" stroke="#ccc" strokeWidth="2" /></Ic>
        <Ic w={15} h={14} className="ml-[13px]"><path d="M12.500 4A6 6 0 1 0 13 8.500" stroke="#555" strokeWidth="2" /><path d="M14 0v6H8z" fill="#555" /></Ic>
        <div className="ml-[10px] flex h-[28px] w-[1458px] items-center rounded-[3px] border border-[#a9a9a9] bg-white">
          <Ic w={15} h={15} className="ml-[7px]"><circle cx="7.500" cy="7.500" r="6.500" stroke="#555" strokeWidth="1.400" /><path d="M7.500 6.500v5M7.500 3.500v1.500" stroke="#555" strokeWidth="1.700" /></Ic>
          <Fit w={76} className="ml-[7px] text-[#333]">192.168.0.20</Fit>
          <Fit w={513} className="text-[#808080]">:9090/Web/Users/Administracion/Organizaciones/FrmConsultaOrganizaciones.aspx</Fit>
          <Ic w={15} h={14} className="ml-auto mr-[7px]"><path d="M7.500 1.500l1.700 4h4.300l-3.400 2.700 1.300 4.300-3.900-2.600-3.900 2.600 1.300-4.300L1.500 5.500h4.300z" stroke="#555" strokeWidth="1.300" /></Ic>
        </div>
        <div className="ml-[6px] flex h-[24px] w-[24px] items-center justify-center rounded-[2px] bg-[#dcdcdc]"><Ic w={16} h={16}><circle cx="8" cy="8" r="8" fill="#f29900" /><path d="M8 4v5M8 10.500v2" stroke="#fff" strokeWidth="2" /></Ic></div>
      </div>
      <div className="flex h-[25px] items-center border-b border-[#a9a9a9] bg-[#f1f1f1] pb-[4px] text-[12px] leading-4 text-[#222]">
        <Ic w={14} h={14} className="ml-[10px]">
          <path d="M0 0h3v3H0zM5.500 0h3v3h-3zM11 0h3v3h-3z" fill="#e53935" /><path d="M0 5.500h3v3H0z" fill="#43a047" /><path d="M5.500 5.500h3v3h-3z" fill="#1e88e5" /><path d="M11 5.500h3v3h-3z" fill="#fb8c00" /><path d="M0 11h3v3H0zM5.500 11h3v3h-3z" fill="#2f9e44" /><path d="M11 11h3v3h-3z" fill="#fb8c00" />
        </Ic>
        <Fit w={66} className="ml-[7px]">Aplicaciones</Fit>
        <Ic w={15} h={15} className="ml-[12px]"><path d="M0 0h7v7H0z" fill="#f25022" /><path d="M8 0h7v7H8z" fill="#7fba00" /><path d="M0 8h7v7H0z" fill="#00a4ef" /><path d="M8 8h7v7H8z" fill="#ffb900" /></Ic>
        <div className="ml-[6px] w-[117px] overflow-hidden mask-[linear-gradient(90deg,#000_85%,transparent)]"><Fit w={118}>Paneles: Panel de activ</Fit></div>
        <div className="ml-[12px] flex h-[16px] w-[17px] items-center bg-[linear-gradient(90deg,#0a68a8_55%,#fff_55%)]">
          <span className="w-[9px] text-[14px] font-bold leading-4 text-white">G</span><span className="text-[11px] font-bold leading-4 text-[#0a68a8]">a</span>
        </div>
        <Fit w={82} className="ml-[4px]">Gartner Reprint</Fit>
        <PageIcon className="ml-[14px]" />
        <Fit w={42} className="ml-[7px]">KiiniNet</Fit>
        <Ic w={16} h={10} className="ml-[12px]"><path d="M4 0h8l4 5-4 5H4L0 5z" fill="#e2231a" /><path d="M4 1.500L12 8.500V1.500L4 8.500z" fill="#fff" /></Ic>
        <div className="ml-[5px] overflow-hidden mask-[linear-gradient(90deg,#000_82%,#0005)]"><Fit w={114}>:: HSBC MÁS PUNTOS</Fit></div>
      </div>
    </div>
  );
}

const DownTri = ({ className = "", c = "#222b2e" }) => <Ic w={6} h={7} className={className}><path d="M0 0.500h6L3 6.500z" fill={c} /></Ic>;

const DimSelect = ({ w = 0, children }) => (
  <div className="flex h-[41px] w-[205.8px] shrink-0 items-center border border-[#73797a] pl-[16px] pr-[6px] text-[15px] text-[#2a3234]">
    {children && <Fit w={w} className="pt-[3px]">{children}</Fit>}
    <DownTri className="-mt-[2px] ml-auto" />
  </div>
);

const LABELS = ["Holding", "Compañia", "Direccion", "", "", "Sub Gerencia", "Jefatura"];
const TCOLS = "grid grid-cols-[274px_280px_136px_173px_135px_172px_127px_142px]";
const TABLE = ["", "COMPRAS", "PAGOS", "COLOCACIÓN EN SITIO MEXICO"];

function DimPage() {
  return (
    <div className="h-[578px] overflow-hidden bg-[#808080] pl-[40px] pt-[15px] text-[14px] leading-5 text-[#1a1a1a]">
      <div className="flex">
        <div className="h-[620px] w-[1506px] rounded-t-[5px] border-x border-[#202223]">
          <div className="flex h-[78px] justify-between rounded-t-[4px] bg-[#202122]">
            <Fit w={242} className="ml-[15px] pt-[27px] text-[25px] leading-[34px] text-[#808080]">Consulta Organizacion</Fit>
            <Ic w={18} h={18} className="mt-[4px]"><path d="M2 1l14 15M16 1L2 16" stroke="#2c2e2f" strokeWidth="5" /><path d="M2 1l14 15M16 1L2 16" stroke="#151617" strokeWidth="4" /></Ic>
          </div>
          <div className="ml-[15px] mt-[15px] w-[1474px] rounded-t-[5px] border-x border-t border-[#1f2021]">
            <div className="rounded-[4px] border border-[#777]">
              <div className="flex h-[38px] items-center border-b border-[#6f6f6f] bg-[#7b7b7b] pl-[15px] text-[16px]"><Fit w={43}>Filtros</Fit></div>
              <div className="flex pt-[15px]"><div className="w-[206px] pl-[14px] pt-[10px]"><Fit w={101}>Tipo de Usuario</Fit></div><DimSelect w={63}>CLIENTE</DimSelect></div>
              <div className="flex h-[57px] items-center pt-[12px]">{LABELS.map((l, i) => <div key={i} className="w-[205.8px] shrink-0 pl-[14px]">{l}</div>)}</div>
              <div className="flex">{LABELS.map((l, i) => <DimSelect key={i} w={133}>{i === 0 ? "==SELECCIONE==" : ""}</DimSelect>)}</div>
              <div className="mt-[15px] flex h-[34px] w-[206px] items-center justify-center rounded-[4px] border border-[#1b3d5c] bg-[#21476b] text-[#8f979f]"><Fit w={120} className="pb-[2px]">Agregar Compañia</Fit></div>
              <div className="h-[30px]" />
            </div>
          </div>
          <div className="ml-[15px] h-[300px] w-[1474px] rounded-t-[5px] border-x-2 border-t border-[#1f2021] pl-[15px] pt-[15px]">
            <div className="w-[1440px] border-l border-t border-[#6d6d6d]">
              <div className={TCOLS + " h-[58px] border-b-2 border-[#6d6d6d]"}>
                {["Holding", "Compañia", "", "", "", "Sub Gerencia", "Jefatura", "Habilitado"].map((h, i) => (
                  <div key={i} className={"border-r border-[#6d6d6d] px-[23px] pt-[8px] " + (i === 5 ? "pr-[70px]" : "")}>{h}</div>
                ))}
              </div>
              {TABLE.map((c, r) => (
                <div key={r} className={TCOLS + " h-[21px] border-b border-[#6d6d6d] text-center leading-[19px]"}>
                  {[<Fit key="p" w={213}>PANELES SOLARES DE MÉXICO</Fit>, c, "", "", "", "", "", "SI"].map((t, i) => (
                    <div key={i} className="whitespace-nowrap border-r border-[#6d6d6d]">{t}</div>
                  ))}
                </div>
              ))}
            </div>
          </div>
        </div>
        <div className="ml-[20px] mt-[413px] h-[20px] w-[3px] border-y border-l border-[#6a6a6a] bg-[#666]" />
      </div>
    </div>
  );
}

function ErrorIcon() {
  return (
    <Ic w={64} h={64}>
      <defs>
        <linearGradient id="gloss" x1="0" y1="0" x2="0" y2="1"><stop offset="0" stopColor="#fff" stopOpacity=".8" /><stop offset="1" stopColor="#ff6060" stopOpacity=".3" /></linearGradient>
      </defs>
      <circle cx="32" cy="32" r="30.500" fill="#ff0000" stroke="#c00a0a" strokeWidth="3" />
      <path d="M4 38A28 28 0 1 1 58 24C40 22 20 24 4 38z" fill="url(#gloss)" />
      <path d="M28 59C42 57 52 51 57 43C57 53 44 62 28 59z" fill="#fff" fillOpacity=".55" />
      <path d="M24.500 17L32 24.500L39.500 17L47.500 24L39.500 32L47.500 40L39.500 47.500L32 40L24.500 47.500L16.500 40L24.500 32L16.500 24z" fill="#fff" />
    </Ic>
  );
}

function Modal() {
  return (
    <div className="absolute left-[486px] top-[31px] flex h-[512px] w-[598px] flex-col rounded-[6px] bg-white px-[15px] pt-[15px] text-[14px] leading-5 text-[#333] shadow-[0_5px_15px_rgba(0,0,0,0.6)]">
      <div className="h-[166px] rounded-[4px] border border-[#ff0000] text-[#ff0000]">
        <div className="flex h-[79px] items-center pl-[15px] pt-[15px] text-[24px]"><ErrorIcon /><Fit w={53} className="pt-[1px]">Error</Fit></div>
        <div className="-ml-[15px] flex">
          <div className="mt-[9px] h-[4px] w-[4px] shrink-0 rounded-full bg-[#ff0000]" />
          <div className="ml-[11px] flex w-[568px] flex-col items-start">
            <Fit w={428}>The INSERT statement conflicted with the FOREIGN KEY constraint</Fit>
            <Fit w={557}>"FK_Organizacion_Holding". The conflict occurred in database "KiiniNet_Pruebas", table</Fit>
            <Fit w={400}>"dbo.Holding", column 'Id'. The statement has been terminated.</Fit>
          </div>
        </div>
      </div>
      <div className="mt-[20px] h-[240px] rounded-[5px] border border-[#404143] bg-[linear-gradient(#404143_97px,#fff_97px)]">
        <div className="flex h-[97px] flex-col pl-[15px] text-white">
          <Fit w={277} className="-ml-px mt-[29px] self-start text-[24px] leading-[28px]">ALTA NUEVA COMPAÑIA</Fit>
          <Fit w={90} className="mt-[11px] self-start text-[10px] font-bold">==SELECCIONE==</Fit>
        </div>
        <div className="flex pl-[15px] pt-[15px] font-bold">
          <div className="w-[94px] pt-[10px]">Tipo de<br />Usuario</div>
          <div className="flex h-[41px] w-[441px] items-center border border-[#dce1e2] pl-[16px] pr-[6px] text-[15px] font-normal text-[#4c5a60] shadow-[inset_0_1px_1px_rgba(0,0,0,0.06)]"><Fit w={63} className="pt-[3px]">CLIENTE</Fit><DownTri className="-mt-[2px] ml-auto" c="#46545a" /></div>
        </div>
        <div className="mt-[11px] flex pl-[15px] font-bold">
          <div className="w-[94px] pt-[10px]"><Fit w={81}>Descripcion</Fit></div>
          <div className="mt-[1px] flex h-[34px] w-[441px] items-center rounded-[4px] border border-[#ccc] pl-[12px] font-normal text-[#555] shadow-[inset_0_1px_1px_rgba(0,0,0,0.075)]"><Fit w={247}>FERRETERAS ESPECIALIZADAS GDL</Fit></div>
        </div>
      </div>
      <div className="flex h-[55px] items-center justify-center gap-[4px] rounded-b-[4px] border-t border-[#ddd] bg-[#f4f4f4] text-white">
        <div className="flex h-[34px] w-[75px] items-center justify-center rounded-[4px] bg-[#5cb85c]">Aceptar</div>
        <div className="flex h-[34px] w-[83px] items-center justify-center rounded-[4px] border border-[#d43f3a] bg-[#d9534f]">Cancelar</div>
      </div>
    </div>
  );
}

function Browser() {
  return (
    <div className={"absolute left-[206px] top-[145px] h-[748px] w-[1588px] border border-[#1883d7] shadow-[0_5px_18px_rgba(0,0,0,0.35)] " + UI}>
      <BrowserTop />
      <div className="flex h-[638px]">
        <div className="relative w-[1569px] shrink-0 overflow-hidden font-['Liberation_Sans',Arial,sans-serif]">
          <div className="flex h-[60px] bg-[#000c8a]">
            <div className="ml-[13px] mt-[13px] flex h-[39px] w-[40px] flex-col items-center justify-center gap-[5px] bg-white">
              <div className="h-[3px] w-[24px] bg-black" /><div className="h-[3px] w-[24px] bg-black" /><div className="h-[3px] w-[24px] bg-black" />
            </div>
            <div className="ml-[48px] mt-[1px] flex h-[24px] w-[220px] items-center justify-center bg-black text-[17px] font-bold leading-5 text-white"><Fit w={39} className="pb-[2px]">Area</Fit></div>
            <div className="ml-[1077px] mt-[13px] flex h-[30px] w-[98px] items-center justify-center rounded-[3px] bg-[#5cb85c] text-[12px] font-bold text-white"><Fit w={76}>Cerrar Sesion</Fit></div>
          </div>
          <DimPage />
          <Modal />
        </div>
        <div className="flex w-[17px] flex-col items-center justify-between bg-[#f1f1f1] py-[7px]"><Tri className="rotate-180" c="#999" /><Tri c="#999" /></div>
      </div>
    </div>
  );
}

export default function App() {
  return (
    <div className={"relative h-[1152px] w-[2048px] overflow-hidden " + UI}>
      <TitleBar />
      <Ribbon />
      <FormulaBar />
      <Sheet />
      <SheetTabs />
      <StatusBar />
      <Taskbar />
      <Browser />
    </div>
  );
}
